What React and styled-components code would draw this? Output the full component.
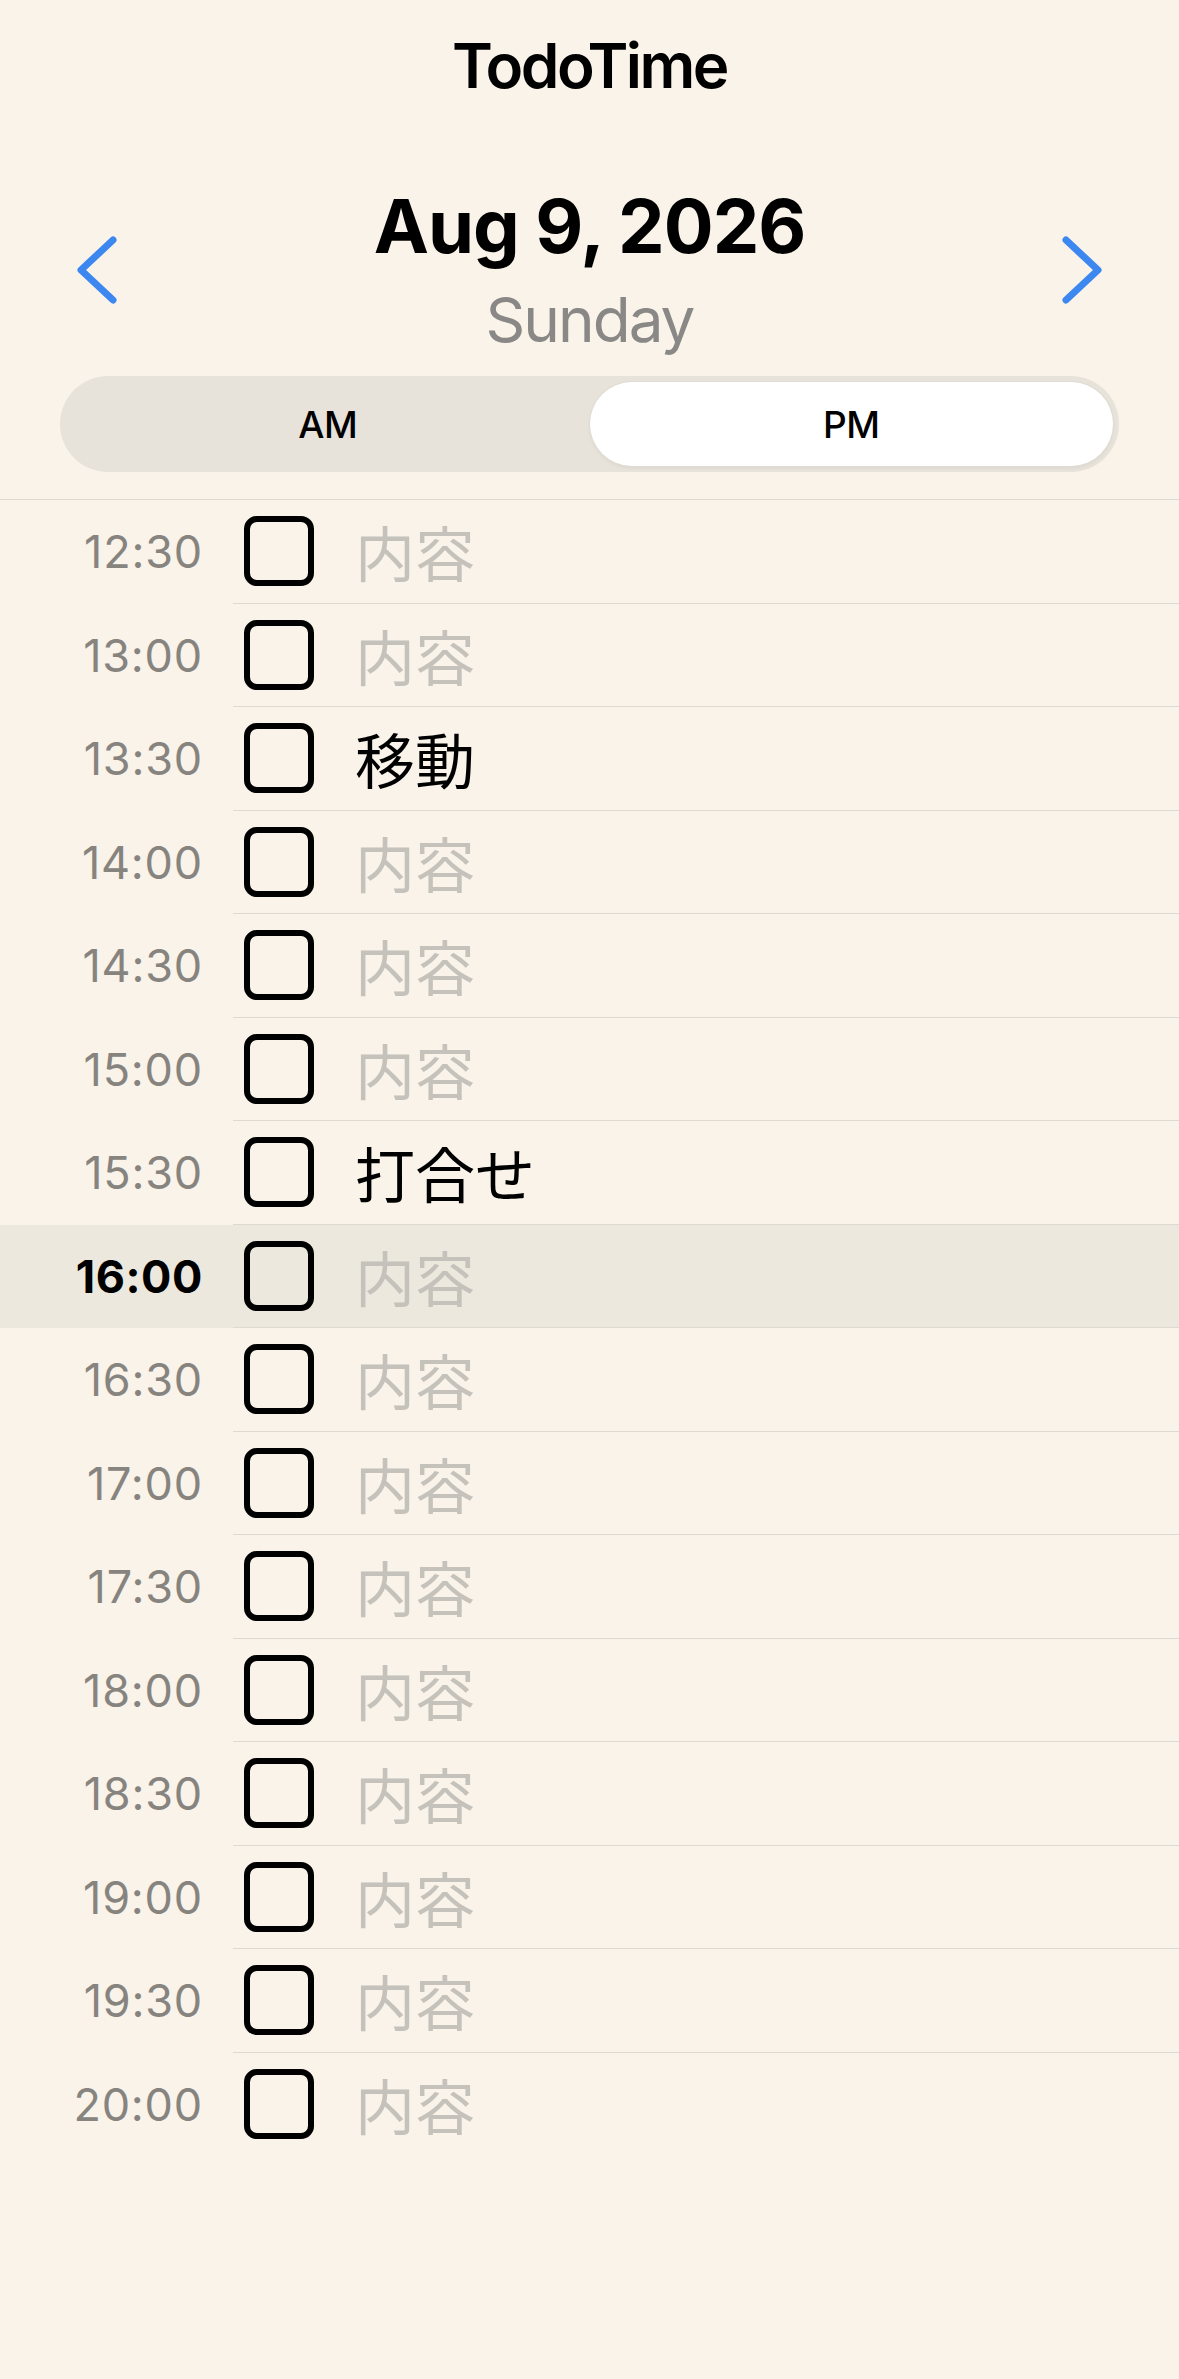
import React from "react";
import styled, { createGlobalStyle } from "styled-components";

const GlobalStyle = createGlobalStyle`
	html, body {
		margin: 0;
		padding: 0;
		background: #f9f3e9;
	}
	body {
		font-family: Inter, "Noto Sans", "Noto Sans CJK JP", sans-serif;
		color: #000;
	}
`;

const Page = styled.div`
	min-height: 2379px;
	padding-top: 35px;
	box-sizing: border-box;
`;

const Title = styled.h1`
	margin: 0;
	font-size: 62px;
	line-height: 62px;
	font-weight: 600;
	letter-spacing: -2.5px;
	text-align: center;
`;

const DateNav = styled.div`
	margin-top: 92px;
	padding: 0 77px;
	display: flex;
	align-items: center;
	justify-content: space-between;
`;

const NavButton = styled.button`
	border: none;
	background: none;
	padding: 0;
	width: 40px;
	height: 68px;
	display: flex;
	cursor: pointer;
`;

const DateBlock = styled.div`
	display: flex;
	flex-direction: column;
	align-items: center;
`;

const DateText = styled.div`
	font-size: 74px;
	line-height: 74px;
	font-weight: 700;
	letter-spacing: -1px;
`;

const Weekday = styled.div`
	margin-top: 26px;
	font-size: 62px;
	line-height: 62px;
	color: #8a8886;
	letter-spacing: -2px;
`;

const Segmented = styled.div`
	margin: 25px 60px 0;
	height: 96px;
	padding: 6px;
	box-sizing: border-box;
	border-radius: 48px;
	background: #e7e3da;
	display: grid;
	grid-template-columns: 1fr 1fr;
`;

const Segment = styled.button`
	border: none;
	border-radius: 42px;
	background: ${(p) => (p.$active ? "#fff" : "transparent")};
	box-shadow: ${(p) =>
		p.$active ? "0 0 0 1px #e0dcd2, 0 2px 4px rgba(0,0,0,0.06)" : "none"};
	font-family: Inter, sans-serif;
	font-size: 37px;
	font-weight: 500;
	letter-spacing: -0.5px;
	color: #000;
	cursor: pointer;
`;

const List = styled.div`
	margin-top: 27px;
	border-top: 1px solid #dddad2;
`;

const Row = styled.div`
	height: 103.5px;
	display: flex;
	align-items: stretch;
	background: ${(p) => (p.$current ? "#ece8de" : "transparent")};
`;

const Time = styled.div`
	width: 203px;
	flex-shrink: 0;
	display: flex;
	align-items: center;
	justify-content: flex-end;
	font-size: 45px;
	line-height: 1;
	font-weight: ${(p) => (p.$current ? 700 : 400)};
	color: ${(p) => (p.$current ? "#000" : "#878480")};
	letter-spacing: ${(p) => (p.$current ? "0.6px" : "0.8px")};
`;

const RowBody = styled.div`
	flex: 1;
	margin-left: 30px;
	padding-left: 11px;
	display: flex;
	align-items: center;
	gap: 41px;
	border-bottom: ${(p) => (p.$last ? "none" : "1px solid #dddad2")};
`;

const Checkbox = styled.span`
	width: 70px;
	height: 70px;
	box-sizing: border-box;
	border: 6px solid #000;
	border-radius: 13px;
	flex-shrink: 0;
`;

const Task = styled.div`
	font-family: "Noto Sans CJK JP", sans-serif;
	font-size: 60px;
	line-height: 1;
	color: ${(p) => (p.$empty ? "#c5c2bb" : "#000")};
`;

const Chevron = ({ dir }) => (
	<svg width="40" height="68" viewBox="0 0 40 68">
		<polyline
			points={dir === "left" ? "36,4 4,34 36,64" : "4,4 36,34 4,64"}
			fill="none"
			stroke="#3d87f0"
			strokeWidth="7"
			strokeLinecap="round"
			strokeLinejoin="round"
		/>
	</svg>
);

const slots = [];
for (let m = 12 * 60 + 30; m <= 20 * 60; m += 30) {
	slots.push(`${Math.floor(m / 60)}:${m % 60 === 0 ? "00" : "30"}`);
}

const tasks = {
	"13:30": "移動",
	"15:30": "打合せ",
};

const currentSlot = "16:00";

export default function App() {
	return (
		<Page>
			<GlobalStyle />
			<Title>TodoTime</Title>
			<DateNav>
				<NavButton aria-label="previous day">
					<Chevron dir="left" />
				</NavButton>
				<DateBlock>
					<DateText>Aug 9, 2026</DateText>
					<Weekday>Sunday</Weekday>
				</DateBlock>
				<NavButton aria-label="next day">
					<Chevron dir="right" />
				</NavButton>
			</DateNav>
			<Segmented>
				<Segment>AM</Segment>
				<Segment $active>PM</Segment>
			</Segmented>
			<List>
				{slots.map((t, i) => {
					const task = tasks[t];
					const current = t === currentSlot;
					return (
						<Row key={t} $current={current}>
							<Time $current={current}>{t}</Time>
							<RowBody $last={i === slots.length - 1}>
								<Checkbox />
								<Task $empty={!task}>{task || "内容"}</Task>
							</RowBody>
						</Row>
					);
				})}
			</List>
		</Page>
	);
}
